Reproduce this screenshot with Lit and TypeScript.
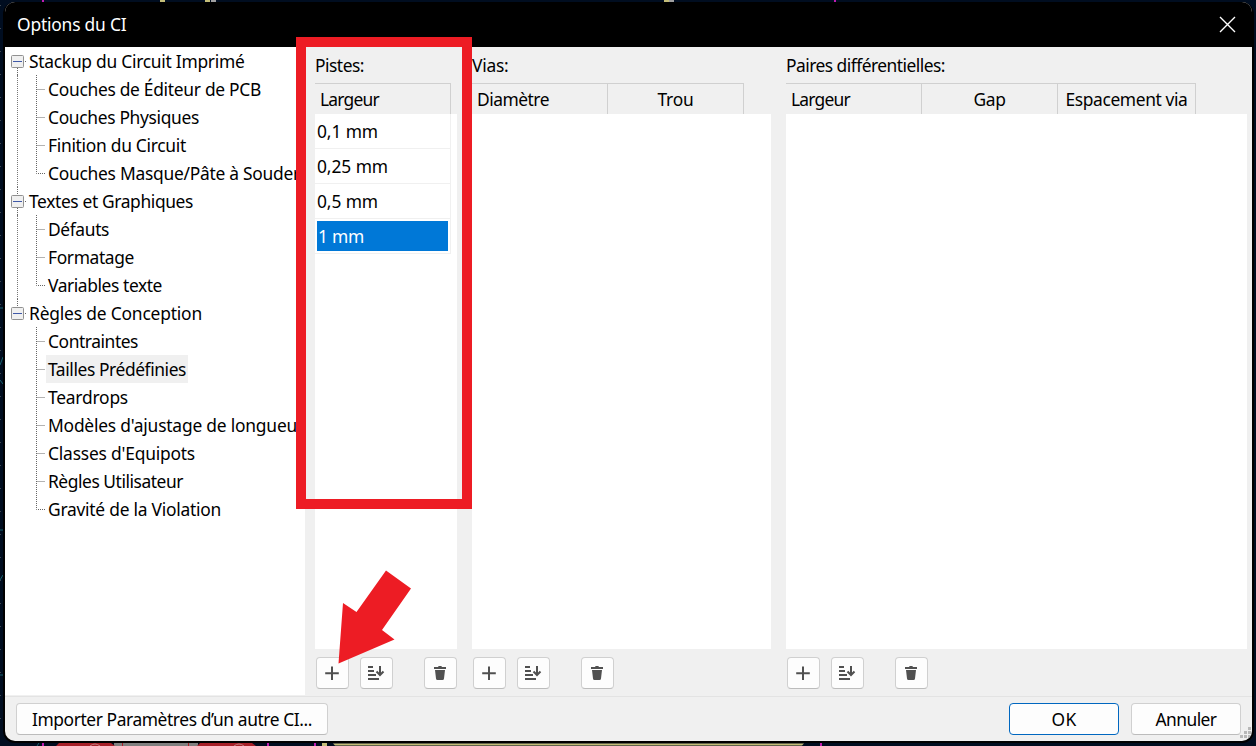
import { LitElement, html, css, svg } from "lit";
import { customElement, property } from "lit/decorators.js";

/** Single line of text whose tracking is adjusted to a given measure. */
@customElement("fit-text")
class FitText extends LitElement {
  static styles = css`
    :host { display: inline-block; white-space: pre; }
    .t { display: inline-block; }
  `;
  @property() text = "";
  @property({ type: Number }) measure = 0;
  render() { return html`<span class="t">${this.text}</span>`; }
  updated() {
    const el = this.renderRoot.querySelector(".t") as HTMLElement;
    el.style.letterSpacing = "0px";
    const w = el.getBoundingClientRect().width;
    if (this.measure) el.style.letterSpacing = (this.measure - w) / this.text.length + "px";
  }
}

const fit = (text: string, measure: number) =>
  html`<fit-text .text=${text} .measure=${measure}></fit-text>`;

const TREE = [
  { name: "Stackup du Circuit Imprimé", w: 215.5, items: [
    ["Couches de Éditeur de PCB", 213], ["Couches Physiques", 151],
    ["Finition du Circuit", 138], ["Couches Masque/Pâte à Souder", 252]] },
  { name: "Textes et Graphiques", w: 164, items: [
    ["Défauts", 61], ["Formatage", 86], ["Variables texte", 114]] },
  { name: "Règles de Conception", w: 173, items: [
    ["Contraintes", 90], ["Tailles Prédéfinies", 138], ["Teardrops", 80],
    ["Modèles d'ajustage de longueur", 256], ["Classes d'Equipots", 147],
    ["Règles Utilisateur", 135], ["Gravité de la Violation", 173]] },
];

const GRIDS = [
  { cls: "g1", title: ["Pistes:", 49], cols: [["Largeur", 59, 136]],
    rows: [["0,1 mm", 61], ["0,25 mm", 71], ["0,5 mm", 61], ["1 mm", 46]], sel: 3 },
  { cls: "g2", title: ["Vias:", 36.5], cols: [["Diamètre", 72, 136], ["Trou", 36, 136]], rows: [], sel: -1 },
  { cls: "g3", title: ["Paires différentielles:", 159],
    cols: [["Largeur", 59, 136], ["Gap", 32, 136], ["Espacement via", 122, 138]], rows: [], sel: -1 },
];

const plus = svg`<path d="M16 9.5V23M9.200 16.200H22.800" stroke="#505050" stroke-width="2" fill="none"/>`;
const sort = svg`<g fill="none" stroke="#505050" stroke-width="2"><path d="M8 10H13M8 14H14M8 18H16M8 22H19"/><path d="M20 9V18"/><path d="M16.500 14.500L20 18L23.500 14.500"/></g>`;
const trash = svg`<g fill="#505050"><path d="M10 10H14L14.700 9H17.300L18 10H22V12H10Z"/><path d="M11 13H21L20 21.500Q19.900 23 18.500 23H13.500Q12.100 23 12 21.500Z"/></g>`;

@customElement("app-root")
class AppRoot extends LitElement {
  static styles = css`
    * { box-sizing: border-box; }
    :host { display: block; position: relative; width: 1256px; height: 746px; overflow: hidden;
      box-sizing: border-box; background: #000d20; padding: 2px 4px 5px 5px;
      font-family: "Noto Sans", "Open Sans", sans-serif; font-size: 17.4px; line-height: 28px; color: #000; }
    .desk { position: absolute; left: 0; top: 0; }
    .win { position: relative; display: flex; flex-direction: column; width: 1247px; height: 739px;
      background: #f0f0f0; border-radius: 10px; overflow: hidden; }
    .shade { position: absolute; left: 3px; top: 2px; width: 1251px; height: 741px; background: #000; border-radius: 12px; }
    .bar { height: 45px; flex: none; background: #000; color: #fff; display: flex; align-items: center;
      justify-content: space-between; padding: 0 16px 1px 12px; }
    .bar svg { display: block; }
    .main { display: flex; height: 648px; flex: none; }
    .tree { width: 300px; background: #fff; overflow: hidden; }
    .head { height: 28px; display: flex; align-items: center; padding-left: 6px; }
    .head svg { flex: none; margin-right: 2px; }
    .items { margin-left: 12px; border-left: 1px dotted #777; padding-left: 18px; }
    .group:last-child .items { border-color: transparent; }
    .item { height: 28px; display: flex; align-items: center; white-space: nowrap; }
    .item svg { flex: none; width: 10px; height: 28px; }
    .lab { height: 28px; padding: 0 2px; display: block; }
    .lab.on { background: #f0f0f0; }
    .grid { display: flex; flex-direction: column; margin-left: 10px; width: 142px; }
    .g2 { width: 299px; margin-left: 15px; }
    .g3 { width: 461px; margin-left: 15px; }
    .cap { height: 36px; padding-top: 4px; }
    .cols { display: flex; height: 31px; }
    .col { border-top: 1px solid #d0d0d0; border-right: 1px solid #d0d0d0; text-align: center; padding-top: 2px;
      line-height: 27px; }
    .col:first-child { text-align: left; padding-left: 5px; }
    .list { height: 535px; background: #fff; }
    .row { width: 136px; height: 35px; border: solid #f0f0f0; border-width: 0 1px 1px 0; padding: 2px; }
    .cell { height: 30px; line-height: 31px; }
    .cell.on { background: #0078d7; color: #fff; padding-left: 1px; }
    .tools { display: flex; padding: 8px 0 0 1px; }
    .btn { background: #fdfdfd; border: 1px solid #d0d0d0; border-bottom-color: #bcbcbc; border-radius: 4px; }
    .tool { width: 33px; height: 32px; margin-right: 11px; }
    .tool:last-child { margin-left: 20px; margin-right: 0; }
    .tool svg { display: block; margin: -1px; }
    .foot { flex: 1; border-top: 1px solid #e3e3e3; margin-top: 1px; display: flex; padding: 6px 11px 0; }
    .big { height: 32px; line-height: 30px; text-align: center; width: 110px; margin-left: 12px; }
    .big.imp { width: 312px; margin: 0 auto 0 0; }
    .big.ok { border-color: #0067c0; }
    .grip { position: absolute; right: 1px; bottom: 2px; }
    .frame { position: absolute; left: 296px; top: 37px; width: 176px; height: 472px; border: 10px solid #ed1c24; }
    .arrow { position: absolute; left: 0; top: 0; pointer-events: none; }
  `;
  branch(last: boolean) {
    return html`<svg viewBox="0 0 10 28"><path d=${last ? "M.5 0V14.500H9" : "M.5 0V28M.5 14.500H9"}
      fill="none" stroke="#666" stroke-dasharray="1 1"/></svg>`;
  }
  render() {
    return html`
      <svg class="desk" width="1256" height="746">
        <g fill="#c4bd78"><path d="M160 0h5v2h-5zM205 0h5v2h-5zM664 0h5v2h-5zM322 743h5v3h-5zM333 743.500h471l-2 2h-467z"/></g>
        <path fill="#c01cb0" d="M42 0h2v2h-2zM834 0h2v2h-2zM42 743h2v3h-2zM267 743h2v3h-2zM314 743h2v3h-2zM820 743h2v3h-2z"/>
        <path fill="#a0a0a0" d="M211 0h5v2h-5zM669 0h5v2h-5z"/>
        <path fill="#808080" d="M114 743h84v3h-84z"/>
        <path fill="#a72029" d="M56 746l3-3h52l4 3zM122 743h1v3h-1zM188 743h1v3h-1zM197 746l3-3h52l4 3z"/>
        <path stroke="#c08080" fill="none" d="M90 746q5-4 10 0M234 746q5-4 10 0"/>
        <path stroke="#17616d" fill="none" d="M37 746l2-3M0 308h3M3 357l-3 8M0 380l3 4M0 530h3M0 580l3-5M0 675h3"/>
        <path stroke="#3d4650" stroke-dasharray="1 22" d="M.5 5V740"/>
      </svg>
      <div class="shade"></div>
      <div class="win">
        <div class="bar">${fit("Options du CI", 109.5)}
          <svg width="17" height="17"><path d="M1 1L16 16M16 1L1 16" stroke="#fff" stroke-width="1.400"/></svg>
        </div>
        <div class="main">
          <div class="tree">${TREE.map((g, gi) => html`
            <div class="group">
              <div class="head">
                <svg width="16" height="28"><path d=${gi == 0 ? "M6.500 21V28" : gi == 1 ? "M6.500 0V8M6.500 21V28" : "M6.500 0V8"} stroke="#666" stroke-dasharray="1 1"/>
                  <rect x=".5" y="8.500" width="12" height="12" rx="1" fill="#f0f0f0" stroke="#919191"/>
                  <path d="M2 14.500H11" stroke="#4059a8"/><path d="M14 14.500h1" stroke="#666"/></svg>
                ${fit(g.name, g.w)}
              </div>
              <div class="items">${g.items.map(([t, w], i) => html`
                <div class="item">${this.branch(i == g.items.length - 1)}
                  <span class="lab ${t == "Tailles Prédéfinies" ? "on" : ""}">${fit(t as string, w as number)}</span>
                </div>`)}
              </div>
            </div>`)}
          </div>
          ${GRIDS.map((g) => html`
            <div class="grid ${g.cls}">
              <div class="cap">${fit(g.title[0] as string, g.title[1] as number)}</div>
              <div class="cols">${g.cols.map(([t, w, cw]) => html`
                <div class="col" style="width:${cw}px">${fit(t as string, w as number)}</div>`)}</div>
              <div class="list">${g.rows.map(([t, w], i) => html`
                <div class="row"><div class="cell ${i == g.sel ? "on" : ""}">${fit(t as string, w as number)}</div></div>`)}</div>
              <div class="tools">${[plus, sort, trash].map((ic) => html`
                <div class="btn tool"><svg width="33" height="32">${ic}</svg></div>`)}</div>
            </div>`)}
        </div>
        <div class="foot">
          <div class="btn big imp">${fit("Importer Paramètres d’un autre CI...", 280)}</div>
          <div class="btn big ok">${fit("OK", 25)}</div>
          <div class="btn big">${fit("Annuler", 61)}</div>
        </div>
        <svg class="grip" width="12" height="12" fill="#b8b8b8"><path d="M9 0h3v3h-3zM5 4h3v3h-3zM9 4h3v3h-3zM1 8h3v3h-3zM5 8h3v3h-3zM9 8h3v3h-3z"/></svg>
      </div>
      <div class="frame"></div>
      <svg class="arrow" width="1256" height="746"><path fill="#ed1c24" d="M386 570.500L411 588.500L382 630L394.500 639.500L338.500 663.500L343 603L356.500 612Z"/></svg>
    `;
  }
}
